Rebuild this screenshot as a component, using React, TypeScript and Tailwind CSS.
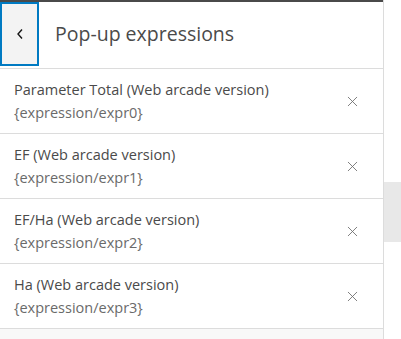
import { X } from "lucide-react";

const expressions = [
  { title: "Parameter Total (Web arcade version)", expr: "{expression/expr0}" },
  { title: "EF (Web arcade version)", expr: "{expression/expr1}" },
  { title: "EF/Ha (Web arcade version)", expr: "{expression/expr2}" },
  { title: "Ha (Web arcade version)", expr: "{expression/expr3}" },
];

function BackButton() {
  return (
    <button className="w-[39px] h-[64px] shrink-0 bg-[#f3f3f3] border-2 border-[#007ac2] flex items-center justify-center">
      <svg width="8" height="12" viewBox="0 0 8 12" fill="none">
        <path d="M6 1.5 L2 6 L6 10.5" stroke="#151515" strokeWidth="1.4" />
      </svg>
    </button>
  );
}

export default function App() {
  return (
    <div className="w-[401px] h-[339px] bg-white flex overflow-hidden font-['Open_Sans',sans-serif]">
      <div className="w-[384px] h-full flex flex-col border-r border-[#dcdcdc] bg-[#f8f8f8]">
        <div className="bg-white border-t-2 border-[#4a4a4a] border-b border-b-[#dcdcdc] h-[69px] flex items-start">
          <BackButton />
          <h1 className="ml-[16px] mt-[18px] text-[19.5px] text-[#4a4a4a] leading-[28px]">Pop-up expressions</h1>
        </div>
        {expressions.map((e) => (
          <div
            key={e.expr}
            className="bg-white h-[65px] border-b border-[#dcdcdc] flex items-center pl-[14px] pr-[22px]"
          >
            <div className="flex-1 flex flex-col gap-[3px]">
              <span className="text-[14.5px] leading-[20px] text-[#4a4a4a]">{e.title}</span>
              <span className="text-[14.5px] leading-[20px] text-[#6a6a6a]">{e.expr}</span>
            </div>
            <X className="w-[17px] h-[17px] text-[#6a6a6a]" strokeWidth={1.2} />
          </div>
        ))}
      </div>
      <div className="flex-1 flex flex-col">
        <div className="mt-[182px] h-[60px] bg-[#e8e8e8]" />
      </div>
    </div>
  );
}
